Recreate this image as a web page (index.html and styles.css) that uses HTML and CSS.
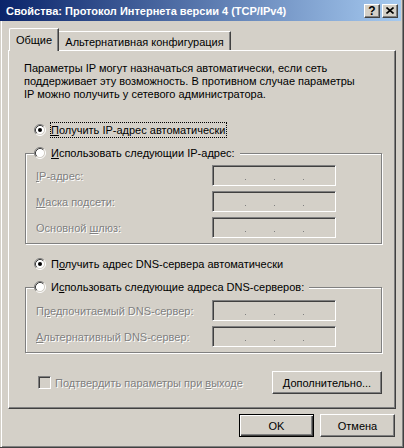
FILE: index.html
```html
<!DOCTYPE html>
<html lang="ru">
<head>
<meta charset="utf-8">
<title>Свойства: Протокол Интернета версии 4 (TCP/IPv4)</title>
<link rel="stylesheet" href="styles.css">
</head>
<body>
<div class="window">
  <div class="titlebar">
    <span class="title">Свойства: Протокол Интернета версии 4 (TCP/IPv4)</span>
    <div class="caption-btns">
      <span class="cbtn help">?</span>
      <span class="cbtn close"><svg width="8" height="7" viewBox="0 0 8 7"><path d="M0.5 0.5L7.5 6.5M7.5 0.5L0.5 6.5" stroke="#000" stroke-width="1.6" fill="none"/></svg></span>
    </div>
  </div>
  <div class="client">
    <div class="tabs">
      <div class="tab active">Общие</div>
      <div class="tab">Альтернативная конфигурация</div>
    </div>
    <div class="panel">
      <p class="intro">Параметры IP могут назначаться автоматически, если сеть<br>поддерживает эту возможность. В противном случае параметры<br>IP можно получить у сетевого администратора.</p>

      <div class="radio-row first">
        <svg class="radio" width="12" height="12" viewBox="0 0 12 12"><circle cx="6" cy="6" r="4.5" fill="#fff"/><path d="M2.11 9.89A5.5 5.5 0 0 1 9.89 2.11" fill="none" stroke="#808080"/><path d="M9.89 2.11A5.5 5.5 0 0 1 2.11 9.89" fill="none" stroke="#fff"/><path d="M2.82 9.18A4.5 4.5 0 0 1 9.18 2.82" fill="none" stroke="#404040"/><path d="M9.18 2.82A4.5 4.5 0 0 1 2.82 9.18" fill="none" stroke="#d4d0c8"/><circle cx="6" cy="6" r="2" fill="#000"/></svg>
        <span class="focus"><u>П</u>олучить IP-адрес автоматически</span>
      </div>

      <fieldset class="group g-ip">
        <legend>
          <svg class="radio" width="12" height="12" viewBox="0 0 12 12"><circle cx="6" cy="6" r="4.5" fill="#fff"/><path d="M2.11 9.89A5.5 5.5 0 0 1 9.89 2.11" fill="none" stroke="#808080"/><path d="M9.89 2.11A5.5 5.5 0 0 1 2.11 9.89" fill="none" stroke="#fff"/><path d="M2.82 9.18A4.5 4.5 0 0 1 9.18 2.82" fill="none" stroke="#404040"/><path d="M9.18 2.82A4.5 4.5 0 0 1 2.82 9.18" fill="none" stroke="#d4d0c8"/></svg>
          <span class="ltext"><u>И</u>спользовать следующии IP-адрес:</span>
        </legend>
        <div class="field"><span class="lbl dis"><u>I</u>P-адрес:</span><span class="ipbox"><i></i><i></i><i></i></span></div>
        <div class="field"><span class="lbl dis"><u>М</u>аска подсети:</span><span class="ipbox"><i></i><i></i><i></i></span></div>
        <div class="field"><span class="lbl dis">Основной <u>ш</u>люз:</span><span class="ipbox"><i></i><i></i><i></i></span></div>
      </fieldset>

      <div class="radio-row second">
        <svg class="radio" width="12" height="12" viewBox="0 0 12 12"><circle cx="6" cy="6" r="4.5" fill="#fff"/><path d="M2.11 9.89A5.5 5.5 0 0 1 9.89 2.11" fill="none" stroke="#808080"/><path d="M9.89 2.11A5.5 5.5 0 0 1 2.11 9.89" fill="none" stroke="#fff"/><path d="M2.82 9.18A4.5 4.5 0 0 1 9.18 2.82" fill="none" stroke="#404040"/><path d="M9.18 2.82A4.5 4.5 0 0 1 2.82 9.18" fill="none" stroke="#d4d0c8"/><circle cx="6" cy="6" r="2" fill="#000"/></svg>
        <span class="rtext">П<u>о</u>лучить адрес DNS-сервера автоматически</span>
      </div>

      <fieldset class="group g-dns">
        <legend>
          <svg class="radio" width="12" height="12" viewBox="0 0 12 12"><circle cx="6" cy="6" r="4.5" fill="#fff"/><path d="M2.11 9.89A5.5 5.5 0 0 1 9.89 2.11" fill="none" stroke="#808080"/><path d="M9.89 2.11A5.5 5.5 0 0 1 2.11 9.89" fill="none" stroke="#fff"/><path d="M2.82 9.18A4.5 4.5 0 0 1 9.18 2.82" fill="none" stroke="#404040"/><path d="M9.18 2.82A4.5 4.5 0 0 1 2.82 9.18" fill="none" stroke="#d4d0c8"/></svg>
          <span class="ltext">И<u>с</u>пользовать следующие адреса DNS-серверов:</span>
        </legend>
        <div class="field"><span class="lbl dis">П<u>р</u>едпочитаемый DNS-сервер:</span><span class="ipbox"><i></i><i></i><i></i></span></div>
        <div class="field"><span class="lbl dis"><u>А</u>льтернативный DNS-сервер:</span><span class="ipbox"><i></i><i></i><i></i></span></div>
      </fieldset>

      <div class="footer-row">
        <span class="checkbox"></span>
        <span class="ctext dis">Подтвердить параметры при <u>в</u>ыходе</span>
        <button class="btn adv"><u>Д</u>ополнительно...</button>
      </div>
    </div>
    <div class="dlg-buttons">
      <button class="btn default">OK</button>
      <button class="btn">Отмена</button>
    </div>
  </div>
</div>
</body>
</html>
```

FILE: styles.css
```css
* { box-sizing: border-box; }
html, body { margin: 0; padding: 0; }
body {
  background: #d4d0c8;
  font-family: "Liberation Sans", Arial, sans-serif;
  font-size: 11px;
  color: #000;
}
u { text-decoration: underline; text-underline-offset: 1px; }

.window {
  width: 404px;
  height: 448px;
  background: #d4d0c8;
  border-right: 1px solid #404040;
  border-bottom: 1px solid #404040;
  box-shadow: inset -1px -1px 0 #808080;
  display: flex;
  flex-direction: column;
  overflow: hidden;
}

.titlebar {
  height: 21px;
  margin-right: 2px;
  flex: none;
  background: linear-gradient(to right, #0a246a, #a6caf0);
  display: flex;
  align-items: center;
  padding: 0 3px 0 6px;
}
.title {
  flex: 1;
  color: #fff;
  font-family: "Liberation Sans", Arial, sans-serif;
  font-weight: bold;
  font-size: 11px;
  white-space: nowrap;
  padding-top: 1px;
}
.caption-btns { display: flex; gap: 2px; padding-top: 1px; }
.cbtn {
  width: 16px;
  height: 14px;
  background: #d4d0c8;
  border: 1px solid;
  border-color: #fff #404040 #404040 #fff;
  box-shadow: inset -1px -1px 0 #808080;
  display: flex;
  align-items: center;
  justify-content: center;
  font-family: "Liberation Sans", Arial, sans-serif;
  font-weight: bold;
  font-size: 12px;
  line-height: 1;
}
.cbtn.help { padding-bottom: 1px; }
.cbtn.close svg { display: block; margin-bottom: 1px; }

.client {
  flex: 1;
  border-left: 1px solid #d4d0c8;
  box-shadow: inset 1px 0 0 #fff;
  padding: 7px 7px 0 7px;
  display: flex;
  flex-direction: column;
}

.tabs {
  height: 22px;
  display: flex;
  align-items: flex-end;
  padding-left: 1px;
}
.tab {
  height: 19px;
  width: 172px;
  text-align: center;
  line-height: 17px;
  padding-top: 2px;
  border-top: 1px solid #fff;
  border-right: 1px solid #404040;
  box-shadow: inset -1px 0 0 #808080;
  background: #d4d0c8;
  white-space: nowrap;
}
.tab.active {
  position: relative;
  z-index: 1;
  width: 50px;
  height: 23px;
  margin-bottom: -1px;
  padding-top: 3px;
  border-left: 1px solid #fff;
  border-top-left-radius: 2px;
  line-height: 16px;
}

.panel {
  width: 388px;
  height: 359px;
  border: 1px solid;
  border-color: #fff #404040 #404040 #fff;
  box-shadow: inset -1px -1px 0 #808080;
  display: flex;
  flex-direction: column;
  flex: none;
}

.intro {
  margin: 11px 0 0 15px;
  line-height: 13px;
  white-space: nowrap;
}

.radio-row {
  height: 16px;
  display: flex;
  align-items: center;
  margin-left: 25px;
}
.radio-row.first { margin-top: 21px; gap: 4px; }
.radio-row.second { margin-top: 12px; gap: 5px; }
.radio { display: block; flex: none; }
.focus {
  border: 1px dotted #000;
  padding: 0 1px 0 0;
  line-height: 14px;
}

.group {
  margin: 7px 13px 0 16px;
  padding: 0 0 5px 0;
  border: 1px solid #808080;
  box-shadow: inset 1px 1px 0 #fff, 1px 1px 0 #fff;
  min-width: 0;
}
.group legend {
  margin-left: 8px;
  padding: 0 5px 0 0;
  height: 16px;
  display: flex;
  align-items: center;
  gap: 5px;
  background: #d4d0c8;
}
.g-ip { padding-top: 4px; }
.g-dns { padding-top: 5px; }

.field {
  height: 21px;
  display: flex;
  align-items: center;
  margin-left: 10px;
}
.field + .field { margin-top: 5px; }
.lbl { width: 176px; flex: none; white-space: nowrap; }
.dis { color: #808080; text-shadow: 1px 1px 0 #fff; }

.ipbox {
  width: 124px;
  height: 21px;
  border: 1px solid;
  border-color: #808080 #fff #fff #808080;
  box-shadow: inset 1px 1px 0 #404040, inset -1px -1px 0 #d4d0c8;
  background: #d4d0c8;
  display: flex;
  gap: 28px;
  padding: 13px 0 0 32px;
}
.ipbox i {
  display: block;
  width: 1px;
  height: 1px;
  background: #808080;
}

.footer-row {
  margin: 18px 13px 0 29px;
  height: 23px;
  display: flex;
  align-items: center;
}
.checkbox {
  width: 13px;
  height: 13px;
  flex: none;
  border: 1px solid;
  border-color: #808080 #fff #fff #808080;
  box-shadow: inset 1px 1px 0 #404040, inset -1px -1px 0 #d4d0c8;
  background: #d4d0c8;
}
.ctext { margin-left: 4px; white-space: nowrap; }

.btn {
  font-family: "Liberation Sans", Arial, sans-serif;
  font-size: 11px;
  color: #000;
  background: #d4d0c8;
  height: 23px;
  width: 75px;
  padding: 0;
  margin: 0;
  border: 1px solid;
  border-color: #fff #404040 #404040 #fff;
  box-shadow: inset -1px -1px 0 #808080;
  border-radius: 0;
}
.btn.adv { width: 110px; margin-left: auto; }
.btn.default {
  border: 1px solid #000;
  box-shadow: inset 1px 1px 0 #fff, inset -1px -1px 0 #404040, inset -2px -2px 0 #808080;
}

.dlg-buttons {
  margin-top: 5px;
  display: flex;
  justify-content: flex-end;
  gap: 6px;
  padding-right: 1px;
}
```
